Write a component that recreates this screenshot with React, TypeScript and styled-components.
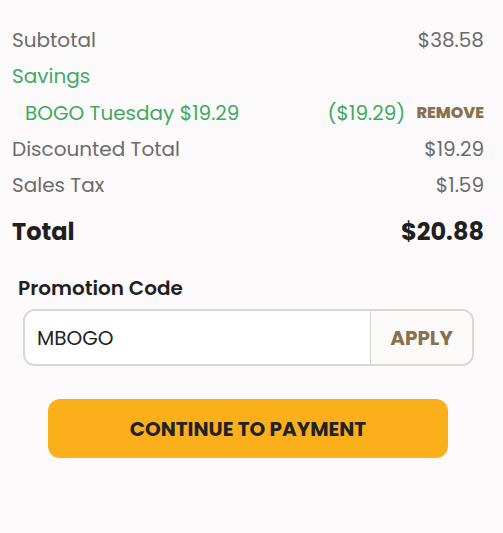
import React from "react";
import styled, { createGlobalStyle } from "styled-components";

const Global = createGlobalStyle`
  html, body { margin: 0; padding: 0; background: #fcf9fa; }
  body { font-family: "Poppins", "Open Sans", "Noto Sans", sans-serif; }
  * { box-sizing: border-box; }
`;

const Page = styled.div`
  width: 503px;
  height: 533px;
  background: #fcf9fa;
  padding: 22px 19px 0 12px;
`;

const Summary = styled.div`
  display: flex;
  flex-direction: column;
`;

const Row = styled.div<{ $tone?: "gray" | "green"; $indent?: boolean }>`
  display: flex;
  align-items: center;
  justify-content: space-between;
  height: 36.3px;
  padding-left: ${(p) => (p.$indent ? 13 : 0)}px;
  font-size: 20px;
  line-height: 30px;
  color: ${(p) => (p.$tone === "green" ? "#3faa5f" : "#6b6b6b")};
`;

const Right = styled.div`
  display: flex;
  align-items: center;
  gap: 11px;
`;

const Remove = styled.button`
  border: none;
  background: none;
  padding: 0;
  font: inherit;
  font-size: 16px;
  font-weight: 800;
  color: #867150;
  cursor: pointer;
`;

const TotalRow = styled.div`
  display: flex;
  justify-content: space-between;
  align-items: center;
  margin-top: 10px;
  height: 36px;
  font-size: 24px;
  font-weight: 700;
  color: #1f1f1f;
`;

const PromoLabel = styled.div`
  margin: 24px 0 0 6px;
  font-size: 20px;
  line-height: 30px;
  font-weight: 600;
  color: #1f1f1f;
`;

const PromoBox = styled.div`
  margin: 6px 10px 0 11px;
  height: 57px;
  display: flex;
  border: 2px solid #d8d6d6;
  border-radius: 12px;
  background: #ffffff;
  overflow: hidden;
`;

const PromoInput = styled.input`
  flex: 1 1 auto;
  min-width: 0;
  border: none;
  outline: none;
  padding: 0 0 0 12px;
  font: inherit;
  font-size: 20px;
  color: #222;
  background: #fff;
`;

const ApplyButton = styled.button`
  flex: 0 0 102px;
  border: none;
  border-left: 1.5px solid #d8d6d6;
  background: #fcfaf9;
  font: inherit;
  font-size: 20px;
  font-weight: 700;
  color: #867150;
  padding: 0;
`;

const PayButton = styled.button`
  display: block;
  margin: 33px 0 0 36px;
  width: 400px;
  height: 59px;
  border: none;
  border-radius: 12px;
  background: #fbb01b;
  font: inherit;
  font-size: 20px;
  font-weight: 700;
  color: #1f2326;
`;

export default function App() {
  return (
    <>
      <Global />
      <Page>
        <Summary>
          <Row>
            <span>Subtotal</span>
            <span>$38.58</span>
          </Row>
          <Row $tone="green">
            <span>Savings</span>
          </Row>
          <Row $tone="green" $indent>
            <span>BOGO Tuesday $19.29</span>
            <Right>
              <span>($19.29)</span>
              <Remove>REMOVE</Remove>
            </Right>
          </Row>
          <Row>
            <span>Discounted Total</span>
            <span>$19.29</span>
          </Row>
          <Row>
            <span>Sales Tax</span>
            <span>$1.59</span>
          </Row>
          <TotalRow>
            <span>Total</span>
            <span>$20.88</span>
          </TotalRow>
        </Summary>
        <PromoLabel>Promotion Code</PromoLabel>
        <PromoBox>
          <PromoInput defaultValue="MBOGO" />
          <ApplyButton>APPLY</ApplyButton>
        </PromoBox>
        <PayButton>CONTINUE TO PAYMENT</PayButton>
      </Page>
    </>
  );
}
